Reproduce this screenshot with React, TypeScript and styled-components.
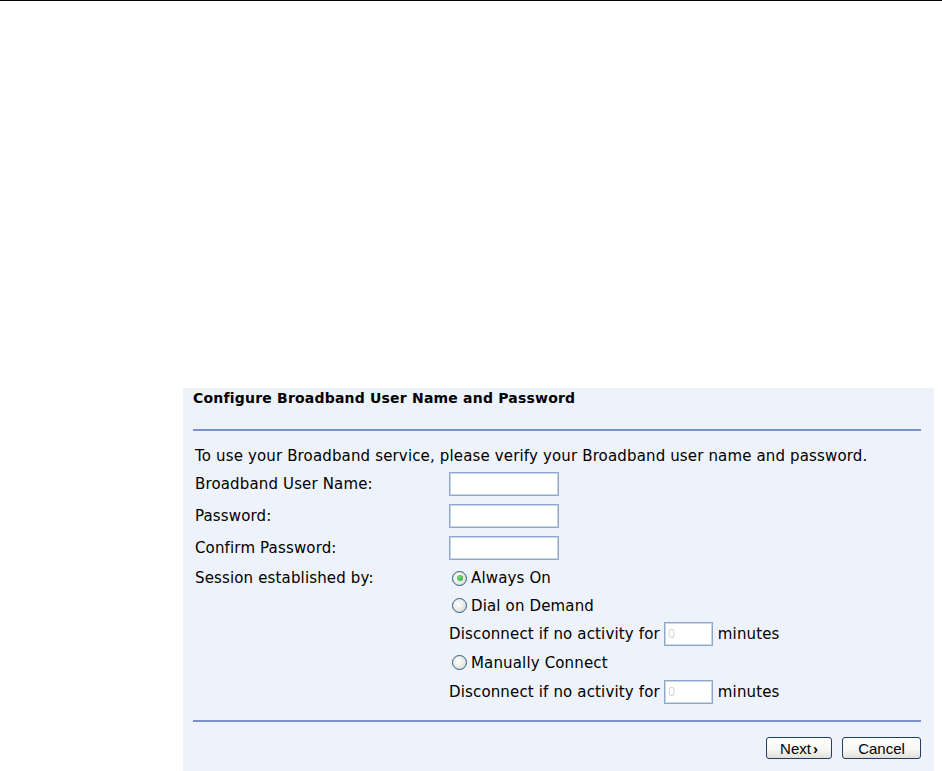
import React from "react";
import styled, { createGlobalStyle } from "styled-components";

const Global = createGlobalStyle`
  html, body { margin: 0; padding: 0; background: #ffffff; }
  body {
    font-family: "DejaVu Sans", Verdana, sans-serif;
    font-size: 15px;
    letter-spacing: 0.15px;
    color: #000;
  }
`;

const Page = styled.div`
  width: 942px;
  height: 771px;
  overflow: hidden;
  display: flex;
  flex-direction: column;
`;

const TopRule = styled.div`
  height: 1px;
  background: #000;
  flex: none;
`;

const Panel = styled.div`
  margin: 387px 0 0 183px;
  width: 751px;
  box-sizing: border-box;
  background: #eef2fa;
  padding: 0 13px 12px 10px;
  display: flex;
  flex-direction: column;
`;

const Heading = styled.div`
  height: 20px;
  line-height: 20px;
  font-weight: bold;
  font-size: 14px;
  letter-spacing: 0.2px;
`;

const Divider = styled.div<{ $top: number }>`
  height: 2px;
  margin-top: ${(p) => p.$top}px;
  background: #7b93c8;
`;

const Intro = styled.div`
  margin-top: 13px;
  height: 24px;
  line-height: 24px;
  padding-left: 2px;
  white-space: nowrap;
`;

const Row = styled.div<{ $h: number }>`
  height: ${(p) => p.$h}px;
  display: grid;
  grid-template-columns: 254px 1fr;
  align-items: center;
  padding-left: 2px;
  white-space: nowrap;
`;

const Label = styled.div``;

const Field = styled.div`
  display: flex;
  align-items: center;
`;

const TextBox = styled.input`
  width: 110px;
  height: 24px;
  box-sizing: border-box;
  border: 1px solid #8fa7c6;
  box-shadow: inset 0 0 0 1px #c9d6e8;
  background: #fff;
  margin: 0;
  padding: 0 3px;
  font-family: inherit;
  font-size: 13px;
  outline: none;
`;

const SmallBox = styled(TextBox)`
  width: 49px;
  margin: 0 5px 0 4px;
  color: #b8b8b8;
  font-size: 12px;
  font-weight: 300;
`;

const RadioOption = styled.label`
  display: flex;
  align-items: center;
  margin-left: 3px;
  gap: 4px;
`;

const RadioCircle = styled.span<{ $on?: boolean }>`
  width: 15px;
  height: 15px;
  box-sizing: border-box;
  border-radius: 50%;
  border: 1px solid #2b5b8a;
  background: radial-gradient(circle at 40% 40%, #ffffff 0%, #e6e6e0 60%, #c8c8c0 100%);
  display: flex;
  align-items: center;
  justify-content: center;
  &::after {
    content: "";
    display: ${(p) => (p.$on ? "block" : "none")};
    width: 6px;
    height: 6px;
    border-radius: 50%;
    background: radial-gradient(circle at 40% 40%, #7fe07f, #1f9d1f);
  }
`;

const ButtonBar = styled.div`
  margin-top: 15px;
  display: flex;
  justify-content: flex-end;
  gap: 10px;
`;

const Button = styled.button<{ $w: number }>`
  width: ${(p) => p.$w}px;
  height: 22px;
  box-sizing: border-box;
  border: 1px solid #1f3f66;
  border-radius: 3px;
  background: linear-gradient(#ffffff 0%, #f6f6f2 60%, #e2dfd6 100%);
  font-family: "Liberation Sans", Arial, sans-serif;
  font-size: 15px;
  letter-spacing: 0;
  color: #000;
  padding: 0;
  margin: 0;
  display: flex;
  align-items: center;
  justify-content: center;
`;

const Chevron = styled.span`
  font-weight: bold;
  margin-left: 2px;
`;

function Disconnect() {
  return (
    <Row $h={29}>
      <Label />
      <Field>
        Disconnect if no activity for
        <SmallBox defaultValue="0" disabled />
        minutes
      </Field>
    </Row>
  );
}

export default function App() {
  return (
    <>
      <Global />
      <Page>
        <TopRule />
        <Panel>
          <Heading>Configure Broadband User Name and Password</Heading>
          <Divider $top={21} />
          <Intro>
            To use your Broadband service, please verify your Broadband user name and password.
          </Intro>
          <Row $h={32}>
            <Label>Broadband User Name:</Label>
            <Field>
              <TextBox type="text" />
            </Field>
          </Row>
          <Row $h={32}>
            <Label>Password:</Label>
            <Field>
              <TextBox type="password" />
            </Field>
          </Row>
          <Row $h={32}>
            <Label>Confirm Password:</Label>
            <Field>
              <TextBox type="password" />
            </Field>
          </Row>
          <Row $h={28}>
            <Label>Session established by:</Label>
            <RadioOption>
              <RadioCircle $on />
              Always On
            </RadioOption>
          </Row>
          <Row $h={27}>
            <Label />
            <RadioOption>
              <RadioCircle />
              Dial on Demand
            </RadioOption>
          </Row>
          <Disconnect />
          <Row $h={29}>
            <Label />
            <RadioOption>
              <RadioCircle />
              Manually Connect
            </RadioOption>
          </Row>
          <Disconnect />
          <Divider $top={14} />
          <ButtonBar>
            <Button $w={66}>
              Next<Chevron>›</Chevron>
            </Button>
            <Button $w={79}>Cancel</Button>
          </ButtonBar>
        </Panel>
      </Page>
    </>
  );
}
